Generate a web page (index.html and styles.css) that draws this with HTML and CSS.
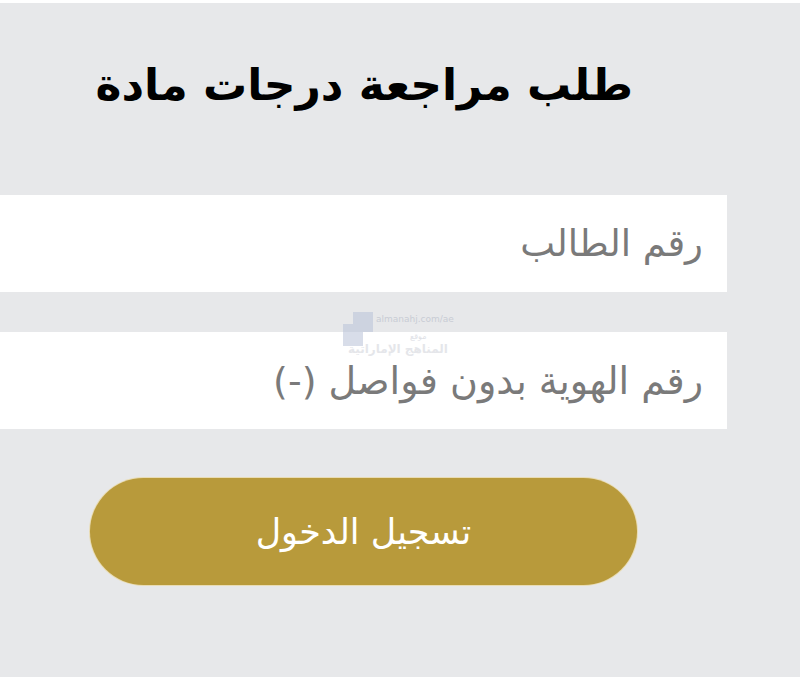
FILE: index.html
```html
<!DOCTYPE html>
<html lang="ar" dir="rtl">
<head>
<meta charset="utf-8">
<link rel="stylesheet" href="styles.css">
</head>
<body>
<div class="page">
  <h1 class="title">طلب مراجعة درجات مادة</h1>
  <form class="form">
    <div class="field"><span class="ph">رقم الطالب</span></div>
    <div class="field field-second"><span class="ph">رقم الهوية بدون فواصل (-)</span></div>
    <div class="btn-row"><button type="button" class="btn">تسجيل الدخول</button></div>
  </form>
  <div class="watermark" aria-hidden="true">
    <div class="wm-logo"><span class="sq sq1"></span><span class="sq sq2"></span></div>
    <div class="wm-url">almanahj.com/ae</div>
    <div class="wm-small">موقع</div>
    <div class="wm-big">المناهج الإماراتية</div>
  </div>
</div>
</body>
</html>
```
FILE: styles.css
```css
html, body {
  margin: 0;
  padding: 0;
  background: #ffffff;
}
body {
  padding-top: 3px;
  font-family: "DejaVu Sans", sans-serif;
}
.page {
  position: relative;
  background: #e7e8ea;
  height: 674px;
  overflow: hidden;
}
.title {
  margin: 0;
  padding: 37px 167px 0 0;
  height: 93px;
  font-family: "DejaVu Sans", sans-serif;
  font-weight: bold;
  font-size: 44px;
  line-height: 90px;
  color: #000;
  text-align: right;
}
.form {
  display: flex;
  flex-direction: column;
  align-items: flex-end;
  margin-top: 62px;
}
.field {
  width: 727px;
  height: 97px;
  background: #ffffff;
  box-sizing: border-box;
  padding-right: 24px;
  display: flex;
  align-items: center;
}
.field-second {
  margin-top: 40px;
}
.ph {
  font-family: "DejaVu Sans", sans-serif;
  font-size: 37px;
  color: #7a7a7a;
  line-height: 1;
}
.field-second .ph {
  font-size: 38px;
}
.btn-row {
  width: 800px;
  display: flex;
  justify-content: flex-end;
  padding-left: 90px;
  box-sizing: border-box;
  margin-top: 49px;
}
.btn {
  width: 547px;
  height: 107px;
  border: none;
  border-radius: 54px;
  background: #b89a3b;
  box-shadow: 0 0 0 1px #e9dcb4;
  color: #ffffff;
  font-family: "DejaVu Sans", sans-serif;
  font-size: 35px;
  padding: 0;
}
.watermark {
  position: absolute;
  left: 340px;
  top: 307px;
  width: 140px;
  height: 60px;
  opacity: 0.55;
  pointer-events: none;
}
.wm-logo .sq {
  position: absolute;
  background: #b9c3d8;
}
.wm-logo .sq1 { left: 13px; top: 2px; width: 20px; height: 20px; }
.wm-logo .sq2 { left: 3px; top: 14px; width: 20px; height: 22px; }
.wm-url {
  position: absolute;
  left: 36px;
  top: 4px;
  font-family: "DejaVu Sans", sans-serif;
  font-size: 9px;
  color: #b0b6c4;
  direction: ltr;
}
.wm-small {
  position: absolute;
  left: 70px;
  top: 22px;
  font-size: 8px;
  color: #c4c8d2;
}
.wm-big {
  position: absolute;
  left: 8px;
  top: 32px;
  font-size: 12px;
  font-weight: bold;
  color: #d0d3da;
  white-space: nowrap;
}
```
